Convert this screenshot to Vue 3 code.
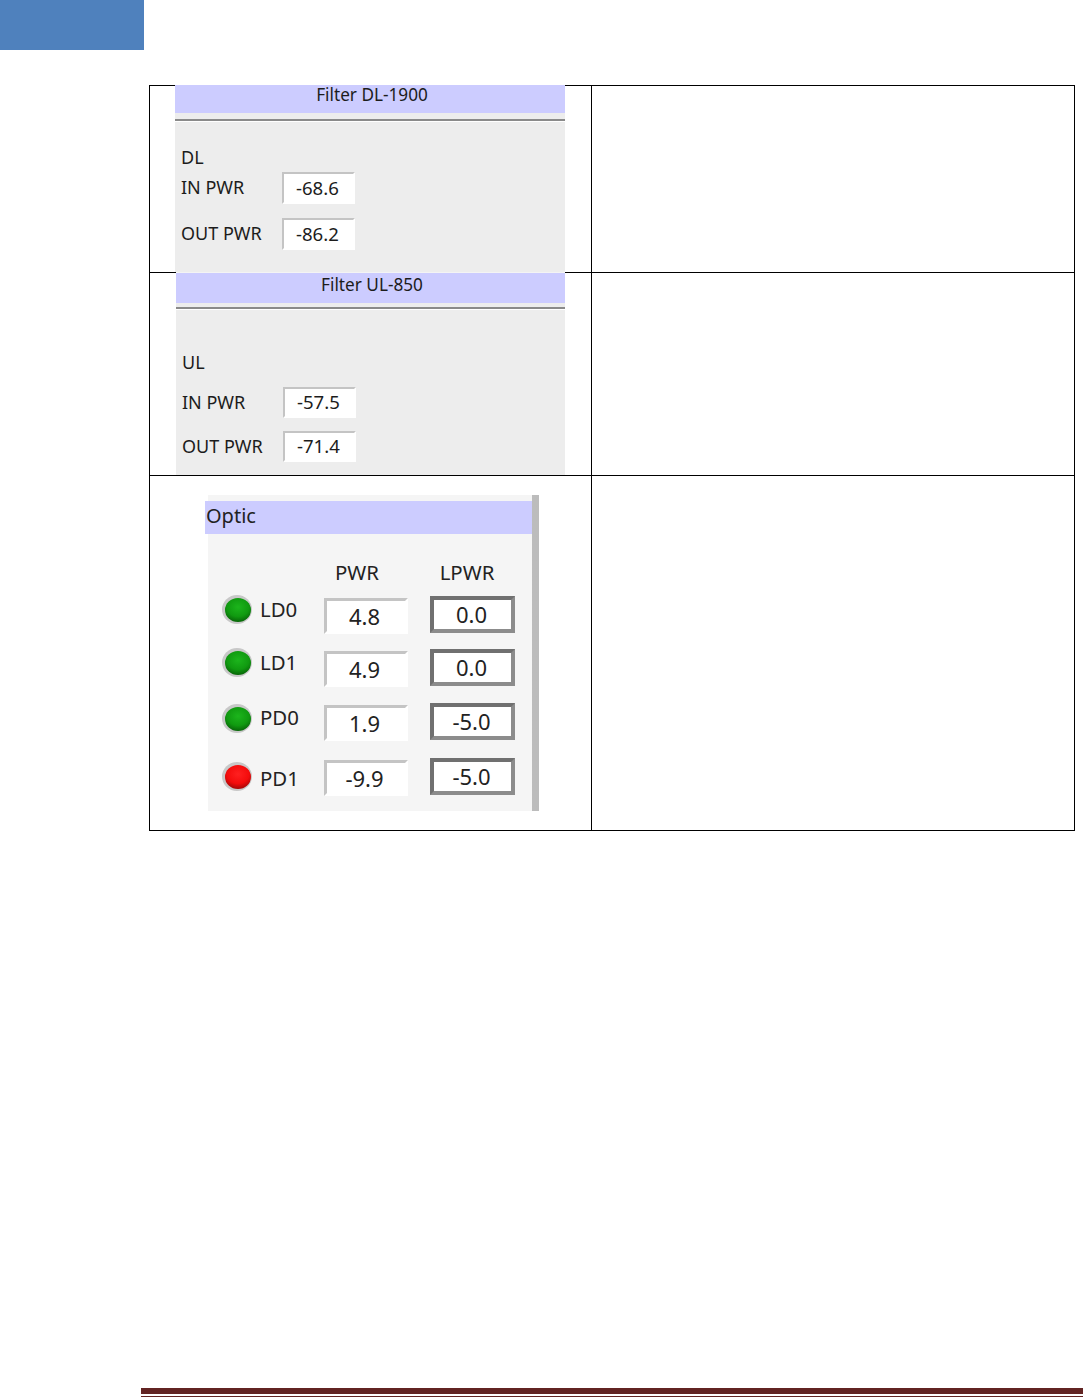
<script setup>
const filters = [
  { id: 'dl', title: 'Filter DL-1900', band: 'DL', rows: [['IN PWR', '-68.6'], ['OUT PWR', '-86.2']] },
  { id: 'ul', title: 'Filter UL-850', band: 'UL', rows: [['IN PWR', '-57.5'], ['OUT PWR', '-71.4']] },
]
const optics = [
  { name: 'LD0', color: 'green', pwr: '4.8', lpwr: '0.0' },
  { name: 'LD1', color: 'green', pwr: '4.9', lpwr: '0.0' },
  { name: 'PD0', color: 'green', pwr: '1.9', lpwr: '-5.0' },
  { name: 'PD1', color: 'red', pwr: '-9.9', lpwr: '-5.0' },
]
</script>

<template>
  <div class="page">
    <div class="tab"></div>
    <div class="table">
      <template v-for="f in filters" :key="f.id">
        <div class="cell left">
          <section class="filter" :class="f.id">
            <h3 class="filter-title">{{ f.title }}</h3>
            <div class="rule"></div>
            <div class="band">{{ f.band }}</div>
            <div v-for="r in f.rows" :key="r[0]" class="frow">
              <span class="flabel">{{ r[0] }}</span>
              <span class="field small">{{ r[1] }}</span>
            </div>
          </section>
        </div>
        <div class="cell"></div>
      </template>
      <div class="cell left">
        <section class="optic">
          <h3 class="optic-title">Optic</h3>
          <div class="heads">
            <span class="head-pwr">PWR</span>
            <span class="head-lpwr">LPWR</span>
          </div>
          <div v-for="o in optics" :key="o.name" class="orow">
            <span class="led-wrap"><span class="led" :class="o.color"></span></span>
            <span class="oname">{{ o.name }}</span>
            <span class="field big">{{ o.pwr }}</span>
            <span class="lfield">{{ o.lpwr }}</span>
          </div>
        </section>
      </div>
      <div class="cell"></div>
    </div>
    <footer class="foot">
      <div class="bar thick"></div>
      <div class="bar thin"></div>
    </footer>
  </div>
</template>

<style>
html, body { margin: 0; background: #fff; }
</style>

<style scoped>
.page {
  height: 1397px;
  width: 1083px;
  display: flex;
  flex-direction: column;
  overflow: hidden;
  font-family: "Noto Sans", "DejaVu Sans", sans-serif;
  color: #1c1c1c;
}
.tab { width: 144px; height: 50px; background: #4f81bd; flex: none; }
.table {
  margin: 35px 0 0 149px;
  width: 926px;
  display: grid;
  grid-template-columns: 442px 483px;
  grid-template-rows: 187px 203px 355px;
  border-top: 1px solid #000;
  border-left: 1px solid #000;
  box-sizing: border-box;
  flex: none;
}
.cell { border-right: 1px solid #000; border-bottom: 1px solid #000; min-width: 0; }

.filter { background: #ededed; box-sizing: border-box; font-size: 18px; }
.filter.dl { margin: -1px 0 0 25px; width: 390px; height: 187px; }
.filter.ul { margin: -1px 0 0 26px; width: 389px; height: 203px; border-top: 1px solid #f4f4f4; }
.filter-title {
  margin: 0;
  background: #ccccff;
  font-size: 17.2px;
  font-weight: 400;
  text-align: center;
  line-height: 20px;
  padding-left: 4px;
  box-sizing: border-box;
}
.dl .filter-title { height: 28px; }
.ul .filter-title { height: 30px; padding-top: 2px; padding-left: 3px; }
.rule { border-top: 2px solid #8a8a8a; border-bottom: 1px solid #fff; background: #f0f0f0; }
.dl .rule { margin-top: 6px; }
.ul .rule { margin-top: 4px; }
.band { padding-left: 6px; line-height: 20px; }
.dl .band { margin-top: 25px; }
.ul .band { margin-top: 42px; }
.frow { display: flex; align-items: center; padding-left: 6px; }
.dl .frow { margin-top: 14px; }
.dl .band + .frow { margin-top: 5px; }
.ul .frow { margin-top: 13px; }
.ul .band + .frow { margin-top: 15px; }
.flabel { width: 101px; flex: none; margin-top: -2px; }

.field {
  box-sizing: border-box;
  display: block;
  background: #fff;
  border-style: solid;
  border-width: 2px;
  border-color: #c4c4c4 #fff #fff #c4c4c4;
  flex: none;
}
.field.small { width: 73px; font-size: 18.6px; padding-left: 12px; }
.dl .field.small { height: 32px; line-height: 27px; }
.ul .field.small { height: 31px; line-height: 26px; }

.optic {
  margin: 19px 0 0 58px;
  width: 331px;
  height: 316px;
  box-sizing: border-box;
  padding-top: 6px;
  background: #f5f5f5;
  border-right: 7px solid #a8a8a8;
  border-image: linear-gradient(to right, #999, #bcbcbc) 1;
  font-size: 20.4px;
  color: #222;
}
.optic-title {
  margin: 0 0 0 -3px;
  height: 33px;
  background: #ccccff;
  font-size: 20px;
  font-weight: 400;
  line-height: 30px;
  padding-left: 1px;
  box-sizing: border-box;
}
.heads { display: flex; height: 62px; box-sizing: border-box; padding-top: 26px; line-height: 24px; }
.head-pwr { width: 84px; margin-left: 116px; text-align: center; padding-right: 18px; box-sizing: border-box; }
.head-lpwr { width: 85px; margin-left: 22px; text-align: center; padding-right: 11px; box-sizing: border-box; white-space: nowrap; }
.orow { display: flex; align-items: flex-start; height: 38px; margin-bottom: 15px; padding-left: 14px; }
.orow:nth-of-type(3) { margin-bottom: 16px; }
.orow:nth-of-type(4) { margin-bottom: 17px; }
.led-wrap {
  width: 30px;
  height: 29px;
  border-radius: 50%;
  background: radial-gradient(ellipse at center, #c8c8c8 70%, #e6e6e6 100%);
  margin-top: -1px;
  display: flex;
  align-items: center;
  justify-content: center;
  flex: none;
}
.orow:nth-of-type(4) .led-wrap { margin-top: 1px; }
.orow:nth-of-type(5) .led-wrap { margin-top: 4px; }
.led { width: 26px; height: 24px; border-radius: 50%; display: block; margin-left: 1px; }
.led.green { background: radial-gradient(ellipse 70% 65% at 50% 38%, #1cb51c 0%, #109a10 60%, #075e07 100%); }
.led.red { background: radial-gradient(ellipse 70% 65% at 50% 38%, #ff2020 0%, #f40c0c 60%, #9c0707 100%); }
.oname { width: 64px; margin-left: 8px; flex: none; line-height: 26px; }
.orow:nth-of-type(4) .oname { margin-top: 1px; }
.orow:nth-of-type(5) .oname { margin-top: 7px; }
.field.big {
  width: 84px;
  height: 36px;
  margin-top: 2px;
  border-width: 3px;
  font-size: 22px;
  line-height: 30px;
  text-align: center;
  padding-right: 3px;
}
.lfield {
  box-sizing: border-box;
  width: 85px;
  height: 37px;
  margin-left: 22px;
  background: #fff;
  border-style: solid;
  border-width: 4px;
  border-color: #707070 #8c8c8c #8c8c8c #707070;
  font-size: 22px;
  line-height: 29px;
  text-align: center;
  padding-right: 2px;
  flex: none;
}

.foot { margin-top: auto; padding-left: 141px; flex: none; }
.bar { background: #622423; }
.thick { height: 6px; margin-bottom: 2px; }
.thin { height: 1px; }
</style>
